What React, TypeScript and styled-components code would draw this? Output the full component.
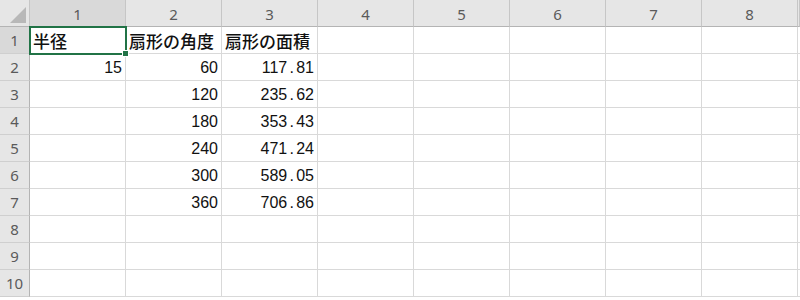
import styled, { createGlobalStyle } from "styled-components";

const Global = createGlobalStyle`
  html, body {
    margin: 0;
    padding: 0;
    background: #ffffff;
  }
`;

const Sheet = styled.div`
  display: grid;
  grid-template-columns: 30px repeat(8, 96px) 2px;
  grid-auto-rows: 27px;
  width: 800px;
  height: 300px;
  overflow: hidden;
  background: #ffffff;
  font-family: "Liberation Sans", "Noto Sans CJK JP", sans-serif;
`;

const Corner = styled.div`
  position: relative;
  background: #e6e6e6;
  border-right: 1px solid #c6c6c6;
  border-bottom: 1px solid #b4b4b4;
  box-sizing: border-box;
  &::after {
    content: "";
    position: absolute;
    right: 3px;
    bottom: 3px;
    width: 0;
    height: 0;
    border-left: 16px solid transparent;
    border-bottom: 16px solid #b8b8b8;
  }
`;

const ColHead = styled.div<{ $active?: boolean }>`
  display: flex;
  align-items: center;
  justify-content: center;
  background: ${(p) => (p.$active ? "#d9d9d9" : "#e6e6e6")};
  border-right: 1px solid #c6c6c6;
  border-bottom: 1px solid #b4b4b4;
  box-sizing: border-box;
  color: #5a5a5a;
  font-family: "Noto Sans", "Liberation Sans", sans-serif;
  font-size: 15px;
  padding-top: 1px;
`;

const RowHead = styled.div<{ $active?: boolean }>`
  display: flex;
  align-items: center;
  justify-content: center;
  background: ${(p) => (p.$active ? "#d9d9d9" : "#e6e6e6")};
  border-right: 1px solid #b4b4b4;
  border-bottom: 1px solid #cfcfcf;
  box-sizing: border-box;
  color: #5a5a5a;
  font-family: "Noto Sans", "Liberation Sans", sans-serif;
  font-size: 15px;
`;

const Cell = styled.div<{ $num?: boolean; $selected?: boolean }>`
  position: relative;
  display: flex;
  align-items: center;
  justify-content: ${(p) => (p.$num ? "flex-end" : "flex-start")};
  padding: 1px 3px 0 3px;
  border-right: 1px solid #d9d9d9;
  border-bottom: 1px solid #d9d9d9;
  box-sizing: border-box;
  color: #111111;
  font-size: 16px;
  white-space: nowrap;
  ${(p) =>
    p.$selected &&
    `
    outline: 2px solid #217346;
    outline-offset: -1px;
    z-index: 1;
  `}
`;

const FillHandle = styled.span`
  position: absolute;
  right: -4px;
  bottom: -4px;
  width: 5px;
  height: 5px;
  background: #217346;
  border: 1px solid #ffffff;
`;

const JpText = styled.span`
  font-family: "Noto Sans CJK JP", sans-serif;
  font-size: 17px;
  font-weight: 500;
  margin-top: -1px;
`;

const Dot = styled.span`
  display: inline-block;
  width: 9px;
  text-align: center;
`;

const cols = [1, 2, 3, 4, 5, 6, 7, 8];

const data: (string | number | null)[][] = [
  ["半径", "扇形の角度", "扇形の面積"],
  [15, 60, "117.81"],
  [null, 120, "235.62"],
  [null, 180, "353.43"],
  [null, 240, "471.24"],
  [null, 300, "589.05"],
  [null, 360, "706.86"],
  [],
  [],
  [],
];

function NumberText({ value }: { value: string | number }) {
  const [whole, frac] = String(value).split(".");
  return (
    <span>
      {whole}
      {frac !== undefined && (
        <>
          <Dot>.</Dot>
          {frac}
        </>
      )}
    </span>
  );
}

export default function App() {
  return (
    <>
      <Global />
      <Sheet>
        <Corner />
        {cols.map((c) => (
          <ColHead key={c} $active={c === 1}>
            {c}
          </ColHead>
        ))}
        <ColHead />
        {data.map((row, r) => (
          <Row key={r} index={r} row={row} />
        ))}
      </Sheet>
    </>
  );
}

function Row({ index, row }: { index: number; row: (string | number | null)[] }) {
  return (
    <>
      <RowHead $active={index === 0}>{index + 1}</RowHead>
      {cols.map((c, i) => {
        const v = row[i];
        const selected = index === 0 && i === 0;
        const isText = typeof v === "string" && /[^\d.]/.test(v);
        return (
          <Cell key={c} $num={v != null && !isText} $selected={selected}>
            {v == null ? null : isText ? <JpText>{v}</JpText> : <NumberText value={v} />}
            {selected && <FillHandle />}
          </Cell>
        );
      })}
      <Cell />
    </>
  );
}
